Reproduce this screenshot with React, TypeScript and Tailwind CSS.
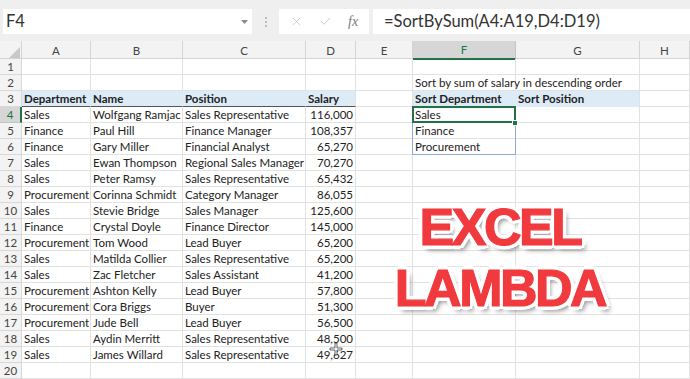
import React from "react";
import { X, Check } from "lucide-react";

const DATA = [
  ["Sales", "Wolfgang Ramjac", "Sales Representative", "116,000"],
  ["Finance", "Paul Hill", "Finance Manager", "108,357"],
  ["Finance", "Gary Miller", "Financial Analyst", "65,270"],
  ["Sales", "Ewan Thompson", "Regional Sales Manager", "70,270"],
  ["Sales", "Peter Ramsy", "Sales Representative", "65,432"],
  ["Procurement", "Corinna Schmidt", "Category Manager", "86,055"],
  ["Sales", "Stevie Bridge", "Sales Manager", "125,600"],
  ["Finance", "Crystal Doyle", "Finance Director", "145,000"],
  ["Procurement", "Tom Wood", "Lead Buyer", "65,200"],
  ["Sales", "Matilda Collier", "Sales Representative", "65,200"],
  ["Sales", "Zac Fletcher", "Sales Assistant", "41,200"],
  ["Procurement", "Ashton Kelly", "Lead Buyer", "57,800"],
  ["Procurement", "Cora Briggs", "Buyer", "51,300"],
  ["Procurement", "Jude Bell", "Lead Buyer", "56,500"],
  ["Sales", "Aydin Merritt", "Sales Representative", "48,500"],
  ["Sales", "James Willard", "Sales Representative", "49,627"],
];

const SORTED = ["Sales", "Finance", "Procurement"];
const LETTERS = ["A", "B", "C", "D", "E", "F", "G", "H"];
const GRID = "grid grid-cols-[22px_69px_92px_123px_50px_57px_103px_124px_1fr]";

type Cell = { text?: string; bold?: boolean; right?: boolean; head?: boolean; headEnd?: boolean };

function buildRow(r: number): Cell[] {
  const cells: Cell[] = LETTERS.map(() => ({}));
  if (r === 2) cells[5] = { text: "Sort by sum of salary in descending order" };
  if (r === 3) {
    ["Department", "Name", "Position", "Salary"].forEach((t, i) => {
      cells[i] = { text: t, bold: true, head: true, headEnd: i === 3 };
    });
    cells[5] = { text: "Sort Department", bold: true, head: true };
    cells[6] = { text: "Sort Position", bold: true, head: true, headEnd: true };
  }
  if (r >= 4 && r <= 19) {
    const d = DATA[r - 4];
    cells[0] = { text: d[0] };
    cells[1] = { text: d[1] };
    cells[2] = { text: d[2] };
    cells[3] = { text: d[3], right: true };
  }
  if (r >= 4 && r <= 6) cells[5] = { text: SORTED[r - 4] };
  return cells;
}

export default function App() {
  const rows = Array.from({ length: 20 }, (_, i) => i + 1);

  return (
    <div className="relative w-[690px] h-[379px] overflow-hidden bg-white font-['Lato','Liberation_Sans',sans-serif] text-[#222]">
      {/* Formula bar */}
      <div className="h-[41px] bg-[#efefef] flex items-start pt-[9px] pl-[3px]">
        <div className="w-[249px] h-[25px] bg-white flex items-center justify-between pl-[3px] pr-[4px]">
          <span className="text-[16.5px] leading-none text-[#333]">F4</span>
          <svg width="7" height="4" viewBox="0 0 7 4">
            <path d="M0 0 L7 0 L3.5 4 Z" fill="#8a8a8a" />
          </svg>
        </div>
        <div className="w-[27px] h-[25px] flex flex-col items-center justify-center gap-[2px]">
          <span className="w-[2px] h-[2px] bg-[#bdbdbd]" />
          <span className="w-[2px] h-[2px] bg-[#bdbdbd]" />
          <span className="w-[2px] h-[2px] bg-[#bdbdbd]" />
        </div>
        <div className="w-[90px] h-[25px] bg-white flex items-center pl-[11px] gap-[16px]">
          <X size={13} strokeWidth={1.2} color="#b8b8b8" />
          <Check size={13} strokeWidth={1.4} color="#b8b8b8" />
          <span className="font-['Liberation_Serif',serif] italic text-[14px] text-[#7a7a7a] leading-none">
            fx
          </span>
        </div>
        <div className="ml-[4px] flex-1 h-[25px] bg-white flex items-center pl-[11px]">
          <span className="text-[16.5px] leading-none text-[#333]">=SortBySum(A4:A19,D4:D19)</span>
        </div>
      </div>

      {/* Column headers */}
      <div className={`${GRID} h-[18px] bg-[#f3f3f3] border-b border-[#d4d4d4] text-[11.5px] text-[#444]`}>
        <div className="relative border-r border-[#d4d4d4]">
          <svg className="absolute right-[1px] bottom-[2px]" width="11" height="11" viewBox="0 0 11 11">
            <path d="M11 0 L11 11 L0 11 Z" fill="#c8c8c8" />
          </svg>
        </div>
        {LETTERS.map((l) => (
          <div
            key={l}
            className={
              l === "F"
                ? "flex items-center justify-center bg-[#d6d6d6] border-r border-[#c4c4c4] border-b-2 border-b-[#217346] text-[#217346]"
                : "flex items-center justify-center border-r border-[#d4d4d4]"
            }
          >
            {l}
          </div>
        ))}
      </div>

      {/* Cells */}
      <div className="relative">
        {rows.map((r) => {
          const cells = buildRow(r);
          return (
            <div key={r} className={`${GRID} h-4 text-[11.5px] leading-[15px]`}>
              <div
                className={
                  r === 4
                    ? "text-center bg-[#d6d6d6] text-[#217346] border-b border-[#c4c4c4] border-r-2 border-r-[#217346]"
                    : "text-center bg-[#f3f3f3] text-[#444] border-b border-r border-[#d8d8d8]"
                }
              >
                {r}
              </div>
              {cells.map((c, i) => {
                let cls = "whitespace-nowrap px-[2px] border-b border-r border-[#e2e2e2]";
                if (c.head) {
                  cls += " bg-[#ddebf7]";
                  if (!c.headEnd) cls += " border-r-[#ddebf7]";
                  if (i <= 3) cls += " border-b-[#555]";
                  else cls += " border-b-[#ddebf7]";
                }
                if (c.bold) cls += " font-bold";
                if (c.right) cls += " text-right";
                return (
                  <div key={i} className={cls}>
                    {c.text}
                  </div>
                );
              })}
            </div>
          );
        })}

        {/* spill range F4:F6 */}
        <div className="absolute left-[412px] top-[47px] w-[104px] h-[49px] border border-[#8eaadb]" />
        {/* active cell F4 */}
        <div className="absolute left-[412px] top-[47px] w-[104px] h-[17px] border-2 border-[#217346]" />
        <div className="absolute left-[512px] top-[61px] w-[6px] h-[6px] bg-[#217346] border border-white" />

        {/* fill cursor */}
        <svg className="absolute left-[329px] top-[283px]" width="14" height="14" viewBox="0 0 14 14">
          <path d="M6 1 L8 1 L8 6 L13 6 L13 8 L8 8 L8 13 L6 13 L6 8 L1 8 L1 6 L6 6 Z" fill="white" stroke="#222" strokeWidth="0.7" />
        </svg>
      </div>

      {/* Title overlay */}
      <div className="absolute left-[380px] top-[197px] w-[240px] text-center font-['Liberation_Sans',Arial,sans-serif] font-bold text-[52px] leading-[61px] tracking-[-2.5px] text-[#f03a3e] [-webkit-text-stroke:1.2px_#f03a3e] [text-shadow:4px_0_0_#fff,-4px_0_0_#fff,0_4px_0_#fff,0_-4px_0_#fff,3px_3px_0_#fff,-3px_-3px_0_#fff,3px_-3px_0_#fff,-3px_3px_0_#fff,4px_5px_5px_rgba(0,0,0,0.45)]">
        <div>EXCEL</div>
        <div>LAMBDA</div>
      </div>
    </div>
  );
}
